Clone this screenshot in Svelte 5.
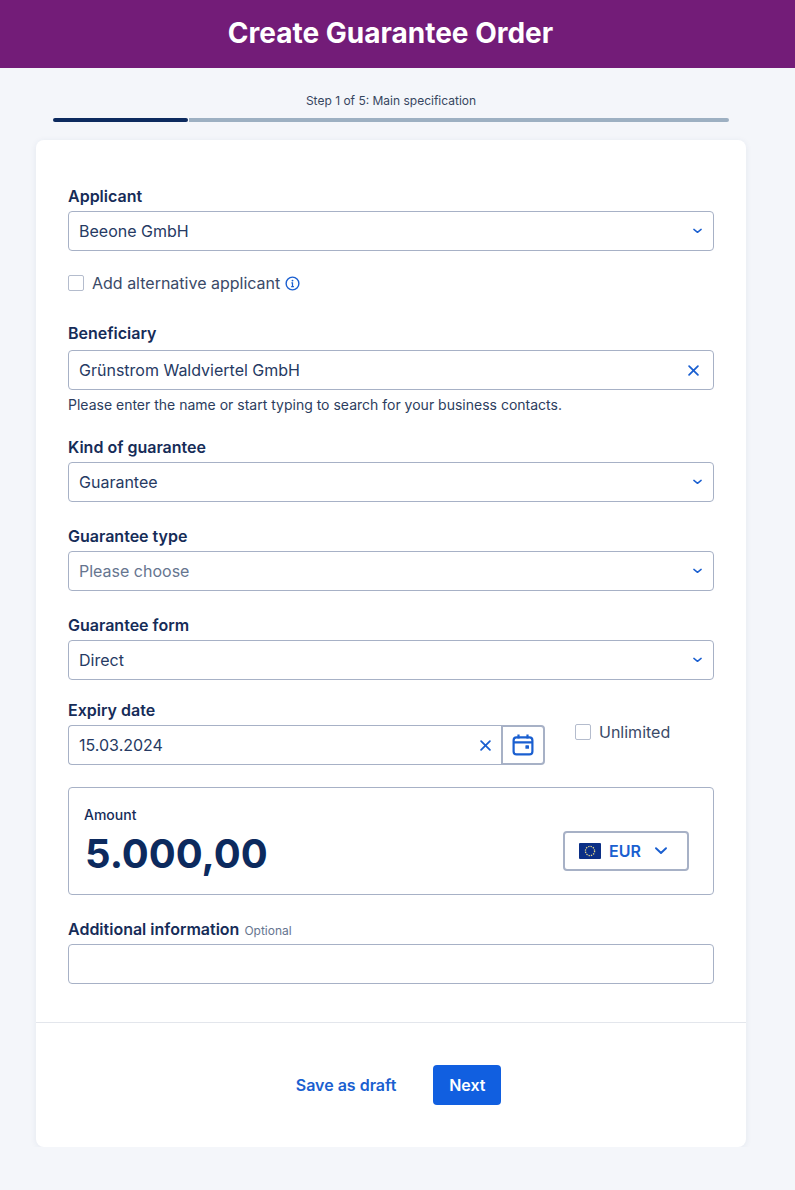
<script>
  const fields = {
    kind: { label: 'Kind of guarantee', value: 'Guarantee' },
    type: { label: 'Guarantee type', value: 'Please choose', placeholder: true },
    form: { label: 'Guarantee form', value: 'Direct' }
  };
</script>

{#snippet chevron()}
  <svg class="chev" viewBox="0 0 10 6" width="9" height="6" aria-hidden="true"><path d="M1 1.2l4 3.3 4-3.3" fill="none" stroke="#1a5fd0" stroke-width="1.6" stroke-linecap="round" stroke-linejoin="round"/></svg>
{/snippet}

{#snippet cross(size)}
  <svg class="cross" viewBox="0 0 10 10" width={size} height={size} aria-hidden="true"><path d="M1 1l8 8M9 1l-8 8" fill="none" stroke="#1a5fd0" stroke-width="1.6" stroke-linecap="round"/></svg>
{/snippet}

{#snippet select(f)}
  <div class="field">
    <div class="label">{f.label}</div>
    <div class="input">
      <span class:placeholder={f.placeholder}>{f.value}</span>
      {@render chevron()}
    </div>
  </div>
{/snippet}

<header class="top"><h1>Create Guarantee Order</h1></header>

<div class="steps">
  <div class="step-text">Step 1 of 5: Main specification</div>
  <div class="bar"><div class="done"></div><div class="todo"></div></div>
</div>

<main class="card">
  <div class="body">
    <div class="field applicant">
      <div class="label">Applicant</div>
      <div class="input"><span>Beeone GmbH</span>{@render chevron()}</div>
    </div>

    <div class="check alt">
      <span class="box"></span>
      <span>Add alternative applicant</span>
      <svg class="info" viewBox="0 0 16 16" width="15" height="15" aria-hidden="true">
        <circle cx="8" cy="8" r="6.8" fill="none" stroke="#1a5fd0" stroke-width="1.5"/>
        <circle cx="8" cy="4.9" r="1" fill="#1a5fd0"/>
        <path d="M6.8 7.3H8v4M6.6 11.3h2.9" fill="none" stroke="#1a5fd0" stroke-width="1.3"/>
      </svg>
    </div>

    <div class="field beneficiary">
      <div class="label">Beneficiary</div>
      <div class="input"><span>Grünstrom Waldviertel GmbH</span>{@render cross(11)}</div>
      <div class="help">Please enter the name or start typing to search for your business contacts.</div>
    </div>

    {@render select(fields.kind)}
    {@render select(fields.type)}
    <div class="form-wrap">{@render select(fields.form)}</div>

    <div class="expiry">
      <div class="date">
        <div class="label">Expiry date</div>
        <div class="date-row">
          <div class="input date-input"><span>15.03.2024</span>{@render cross(11)}</div>
          <div class="cal">
            <svg viewBox="0 0 22 22" width="22" height="22" aria-hidden="true">
              <rect x="1.6" y="3.4" width="18.8" height="17" rx="3" fill="none" stroke="#1a5fd0" stroke-width="2.2"/>
              <path d="M2 8.4h18M6.5 .6v4M15.5 .6v4" fill="none" stroke="#1a5fd0" stroke-width="2.2"/>
              <rect x="13.4" y="11.2" width="3.6" height="3.6" rx=".6" fill="#1a5fd0"/>
            </svg>
          </div>
        </div>
      </div>
      <div class="check unlimited"><span class="box"></span><span>Unlimited</span></div>
    </div>

    <section class="amount">
      <div class="amount-left">
        <div class="amount-label">Amount</div>
        <div class="amount-value">5.000,00</div>
      </div>
      <div class="currency">
        <svg viewBox="0 0 22 16" width="22" height="16" aria-hidden="true">
          <rect width="22" height="16" rx="1" fill="#0b2f86"/>
          <circle cx="11" cy="8" r="4.6" fill="none" stroke="#e6d98a" stroke-width="1.3" stroke-dasharray="1.3 1.11"/>
        </svg>
        <span>EUR</span>
        <svg viewBox="0 0 12 8" width="12" height="8" aria-hidden="true"><path d="M1 1.2L6 6l5-4.8" fill="none" stroke="#1a5fd0" stroke-width="1.9" stroke-linecap="round" stroke-linejoin="round"/></svg>
      </div>
    </section>

    <div class="field additional">
      <div class="label">Additional information <small>Optional</small></div>
      <div class="input"></div>
    </div>
  </div>

  <footer class="actions">
    <button class="ghost">Save as draft</button>
    <button class="primary">Next</button>
  </footer>
</main>

<style>
  :global(body) {
    margin: 0;
    background: #f4f6fa;
    font-family: Inter, "Liberation Sans", sans-serif;
    color: #162c58;
  }
  .top {
    height: 68px;
    background: #731c78;
    display: flex;
    align-items: center;
    justify-content: center;
    padding-right: 14px;
  }
  h1 {
    margin: 0;
    color: #fff;
    font-size: 28px;
    font-weight: 700;
    line-height: 1;
    position: relative;
    top: -1px;
  }
  .steps {
    padding: 26px 66px 18px 53px;
  }
  .step-text {
    font-size: 12px;
    line-height: 14px;
    color: #37465f;
    text-align: center;
    margin-bottom: 10px;
  }
  .bar {
    display: flex;
    gap: 1px;
    height: 4px;
  }
  .done {
    width: 135px;
    background: #0c2a5e;
    border-radius: 2px;
  }
  .todo {
    flex: 1;
    background: #9db0c2;
    border-radius: 0 2px 2px 0;
  }
  .card {
    width: 710px;
    margin-left: 36px;
    height: 1007px;
    box-sizing: border-box;
    background: #fff;
    border-radius: 8px;
    box-shadow: 0 1px 6px rgba(40, 60, 110, 0.08);
  }
  .body {
    padding: 45px 32px 38px;
    border-bottom: 1px solid #e3e6ec;
  }
  .field {
    margin-bottom: 23px;
  }
  .label {
    font-size: 16px;
    font-weight: 600;
    line-height: 22px;
    height: 22px;
    margin-bottom: 4px;
    color: #162c58;
  }
  .label small {
    font-size: 12px;
    font-weight: 400;
    color: #66758f;
    margin-left: 1px;
  }
  .input {
    height: 40px;
    box-sizing: border-box;
    border: 1px solid #a7b1c6;
    border-radius: 4px;
    padding: 0 11px 0 10px;
    display: flex;
    align-items: center;
    justify-content: space-between;
    font-size: 16px;
    background: #fff;
    color: #263a63;
  }
  .placeholder {
    color: #66758f;
  }
  .chev, .cross {
    flex: none;
  }
  .cross {
    margin-right: 3px;
  }
  .applicant {
    margin-bottom: 23px;
  }
  .check {
    display: flex;
    align-items: center;
    gap: 8px;
    font-size: 16px;
    line-height: 16px;
    color: #3a4a68;
  }
  .box {
    width: 16px;
    height: 16px;
    box-sizing: border-box;
    border: 1px solid #b4bccd;
    border-radius: 2px;
    background: #fff;
    flex: none;
  }
  .info {
    margin-left: -3px;
    margin-top: 2px;
  }
  .alt {
    margin-bottom: 31px;
  }
  .beneficiary {
    margin-bottom: 0;
  }
  .beneficiary .label {
    margin-bottom: 6px;
  }
  .help {
    font-size: 14px;
    line-height: 16px;
    margin-top: 7px;
    margin-bottom: 23px;
    color: #2c3d5e;
  }
  .form-wrap .field {
    margin-bottom: 19px;
  }
  .expiry {
    display: flex;
    gap: 30px;
    margin-bottom: 22px;
  }
  .date {
    width: 477px;
  }
  .date-row {
    display: flex;
  }
  .date-input {
    flex: 1;
    border-radius: 4px 0 0 4px;
    border-right: none;
    padding-right: 7px;
  }
  .cal {
    width: 44px;
    height: 40px;
    box-sizing: border-box;
    border: 2px solid #a7b1c6;
    border-radius: 0 4px 4px 0;
    display: flex;
    align-items: center;
    justify-content: center;
  }
  .unlimited {
    margin-top: 25px;
    height: 16px;
    align-self: flex-start;
  }
  .amount {
    height: 108px;
    box-sizing: border-box;
    border: 1px solid #a7b1c6;
    border-radius: 4px;
    padding: 18px 24px 0 15px;
    display: flex;
    justify-content: space-between;
    margin-bottom: 23px;
  }
  .amount-label {
    font-size: 14px;
    font-weight: 500;
    line-height: 17px;
    color: #162c58;
  }
  .amount-value {
    font-size: 40px;
    font-weight: 700;
    line-height: 50px;
    color: #0c2a5e;
    margin-left: 1px;
    margin-top: 6px;
  }
  .currency {
    width: 126px;
    height: 40px;
    box-sizing: border-box;
    margin-top: 25px;
    border: 2px solid #a7b1c6;
    border-radius: 4px;
    padding-left: 14px;
    display: flex;
    align-items: center;
    gap: 8px;
    font-size: 16px;
    font-weight: 600;
    color: #1a5fd0;
  }
  .currency svg:last-child {
    margin-left: 6px;
  }
  .additional {
    margin-bottom: 0;
  }
  .actions {
    display: flex;
    justify-content: center;
    gap: 25px;
    padding: 42px 0 0 3px;
  }
  button {
    font: 600 16px Inter, "Liberation Sans", sans-serif;
    height: 40px;
    border: none;
    border-radius: 4px;
  }
  .ghost {
    background: none;
    color: #1a5fd0;
    padding: 0 12px;
  }
  .primary {
    background: #115fe0;
    color: #fff;
    width: 68px;
    padding: 0;
  }
</style>
